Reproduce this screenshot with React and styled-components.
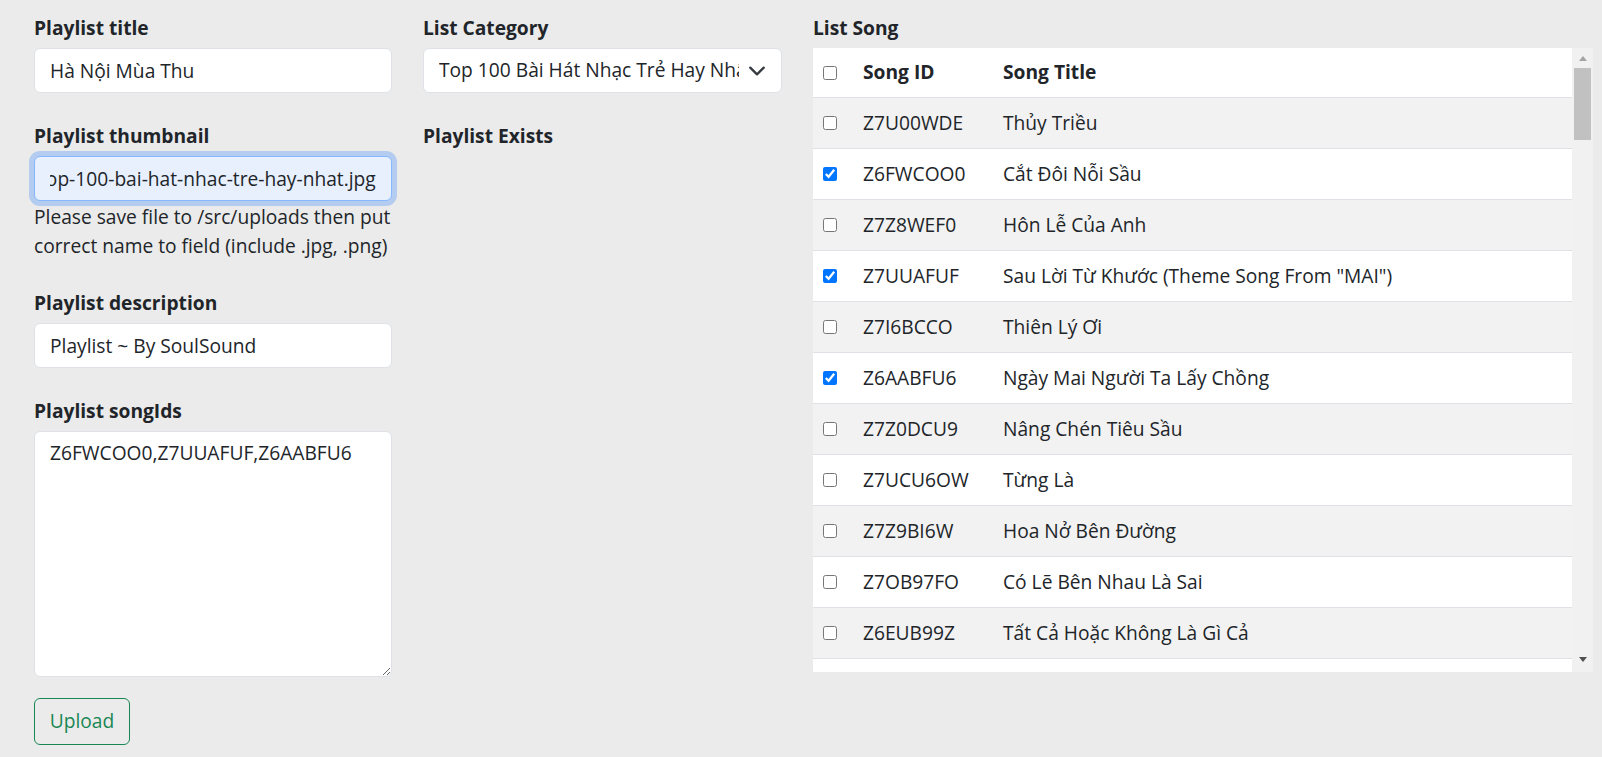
import React, { useEffect, useRef } from "react";
import styled, { createGlobalStyle } from "styled-components";

const FONT = `"Segoe UI", "Open Sans", "Noto Sans", sans-serif`;

const Global = createGlobalStyle`
  html, body { margin: 0; padding: 0; background: #ebebeb; }
  body {
    font-family: ${FONT};
    font-size: 19.2px;
    line-height: 1.5;
    color: #212529;
  }
  *, *::before, *::after { box-sizing: border-box; }
`;

const Page = styled.div`
  display: grid;
  grid-template-columns: 358px 359px 780px;
  column-gap: 31px;
  align-items: start;
  padding: 13px 9px 0 34px;
  min-height: 757px;
`;

const Column = styled.div`
  display: flex;
  flex-direction: column;
`;

const Field = styled.div`
  display: flex;
  flex-direction: column;
  margin-bottom: ${(p) => p.$mb ?? 28}px;
`;

const Label = styled.label`
  font-weight: 700;
  line-height: 29px;
  margin-bottom: 6px;
`;

const TextInput = styled.input`
  height: 45px;
  width: 100%;
  padding: 0 15px;
  font: inherit;
  color: #212529;
  background: ${(p) => (p.$autofill ? "#e8f0fe" : "#fff")};
  border: 1px solid ${(p) => (p.$focused ? "#86b7fe" : "#dee2e6")};
  border-radius: 6px;
  box-shadow: ${(p) => (p.$focused ? "0 0 0 5px rgba(13,110,253,.25)" : "none")};
  outline: none;
`;

const Help = styled.div`
  margin-top: 1px;
  line-height: 29px;
  white-space: nowrap;
`;

const TextArea = styled.textarea`
  height: 246px;
  width: 100%;
  padding: 7px 15px;
  font: inherit;
  line-height: 1.5;
  color: #212529;
  background: #fff;
  border: 1px solid #dee2e6;
  border-radius: 6px;
  resize: vertical;
  outline: none;
`;

const OutlineButton = styled.button`
  align-self: flex-start;
  width: 96px;
  height: 47px;
  padding: 0;
  font: inherit;
  color: #198754;
  background: transparent;
  border: 1px solid #198754;
  border-radius: 6px;
  cursor: pointer;
`;

const SelectWrap = styled.div`
  position: relative;
  height: 45px;
`;

const Select = styled.select`
  appearance: none;
  -webkit-appearance: none;
  width: 100%;
  height: 45px;
  padding: 0 42px 0 15px;
  font: inherit;
  color: #212529;
  background: #fff;
  border: 1px solid #dee2e6;
  border-radius: 6px;
  outline: none;
`;

const Chevron = styled.svg`
  position: absolute;
  right: 16px;
  top: 50%;
  transform: translateY(-50%);
  pointer-events: none;
`;

const TableBox = styled.div`
  display: flex;
  height: 624px;
  background: #fff;
`;

const TableScroll = styled.div`
  flex: 1;
  overflow: hidden;
`;

const Row = styled.div`
  display: grid;
  grid-template-columns: 40px 140px 1fr;
  align-items: center;
  height: ${(p) => (p.$head ? 50 : 51)}px;
  border-bottom: 1px solid #dee2e6;
  background: ${(p) => (p.$striped ? "#f2f2f2" : "#fff")};
  font-weight: ${(p) => (p.$head ? 700 : 400)};
`;

const Cell = styled.div`
  display: flex;
  align-items: center;
  padding-left: 10px;
  white-space: nowrap;
  overflow: hidden;
`;

const Check = styled.input`
  width: 14px;
  height: 14px;
  margin: 0;
  accent-color: #0075ff;
`;

const ScrollTrack = styled.div`
  width: 21px;
  display: flex;
  flex-direction: column;
  align-items: center;
  background: #f1f1f1;
`;

const ArrowBtn = styled.div`
  height: 20px;
  width: 100%;
  display: flex;
  align-items: center;
  justify-content: center;
  &::after {
    content: "";
    width: 0;
    height: 0;
    border-left: 4.5px solid transparent;
    border-right: 4.5px solid transparent;
    ${(p) =>
      p.$dir === "up"
        ? `border-bottom: 5px solid #a3a3a3;`
        : `border-top: 5px solid #505050; margin-top: -6px;`}
  }
`;

const Thumb = styled.div`
  width: 17px;
  height: 72px;
  background: #c1c1c1;
`;

const Spacer = styled.div`
  flex: 1;
`;

const songs = [
  ["Z7U00WDE", "Thủy Triều", false],
  ["Z6FWCOO0", "Cắt Đôi Nỗi Sầu", true],
  ["Z7Z8WEF0", "Hôn Lễ Của Anh", false],
  ["Z7UUAFUF", 'Sau Lời Từ Khước (Theme Song From "MAI")', true],
  ["Z7I6BCCO", "Thiên Lý Ơi", false],
  ["Z6AABFU6", "Ngày Mai Người Ta Lấy Chồng", true],
  ["Z7Z0DCU9", "Nâng Chén Tiêu Sầu", false],
  ["Z7UCU6OW", "Từng Là", false],
  ["Z7Z9BI6W", "Hoa Nở Bên Đường", false],
  ["Z7OB97FO", "Có Lẽ Bên Nhau Là Sai", false],
  ["Z6EUB99Z", "Tất Cả Hoặc Không Là Gì Cả", false],
];

export default function App() {
  const thumbRef = useRef(null);
  useEffect(() => {
    const el = thumbRef.current;
    if (el) el.scrollLeft = el.scrollWidth;
  }, []);

  return (
    <>
      <Global />
      <Page>
        <Column>
          <Field>
            <Label>Playlist title</Label>
            <TextInput defaultValue="Hà Nội Mùa Thu" />
          </Field>
          <Field>
            <Label>Playlist thumbnail</Label>
            <TextInput
              ref={thumbRef}
              $autofill
              $focused
              defaultValue="top-100-bai-hat-nhac-tre-hay-nhat.jpg"
            />
            <Help>
              Please save file to /src/uploads then put
              <br />
              correct name to field (include .jpg, .png)
            </Help>
          </Field>
          <Field>
            <Label>Playlist description</Label>
            <TextInput defaultValue="Playlist ~ By SoulSound" />
          </Field>
          <Field $mb={21}>
            <Label>Playlist songIds</Label>
            <TextArea defaultValue="Z6FWCOO0,Z7UUAFUF,Z6AABFU6" />
          </Field>
          <OutlineButton type="button">Upload</OutlineButton>
        </Column>

        <Column>
          <Field>
            <Label>List Category</Label>
            <SelectWrap>
              <Select defaultValue="top100">
                <option value="top100">Top 100 Bài Hát Nhạc Trẻ Hay Nhất</option>
                <option value="vpop">V-Pop Hot</option>
              </Select>
              <Chevron width="18" height="18" viewBox="0 0 16 16" fill="none">
                <path
                  d="m2 5 6 6 6-6"
                  stroke="#343a40"
                  strokeWidth="2"
                  strokeLinecap="round"
                  strokeLinejoin="round"
                />
              </Chevron>
            </SelectWrap>
          </Field>
          <Field>
            <Label>Playlist Exists</Label>
          </Field>
        </Column>

        <Column>
          <Label>List Song</Label>
          <TableBox>
            <TableScroll>
              <Row $head>
                <Cell>
                  <Check type="checkbox" />
                </Cell>
                <Cell>Song ID</Cell>
                <Cell>Song Title</Cell>
              </Row>
              {songs.map(([id, title, checked], i) => (
                <Row key={id} $striped={i % 2 === 0}>
                  <Cell>
                    <Check type="checkbox" defaultChecked={checked} />
                  </Cell>
                  <Cell>{id}</Cell>
                  <Cell>{title}</Cell>
                </Row>
              ))}
            </TableScroll>
            <ScrollTrack>
              <ArrowBtn $dir="up" />
              <Thumb />
              <Spacer />
              <ArrowBtn $dir="down" />
            </ScrollTrack>
          </TableBox>
        </Column>
      </Page>
    </>
  );
}
